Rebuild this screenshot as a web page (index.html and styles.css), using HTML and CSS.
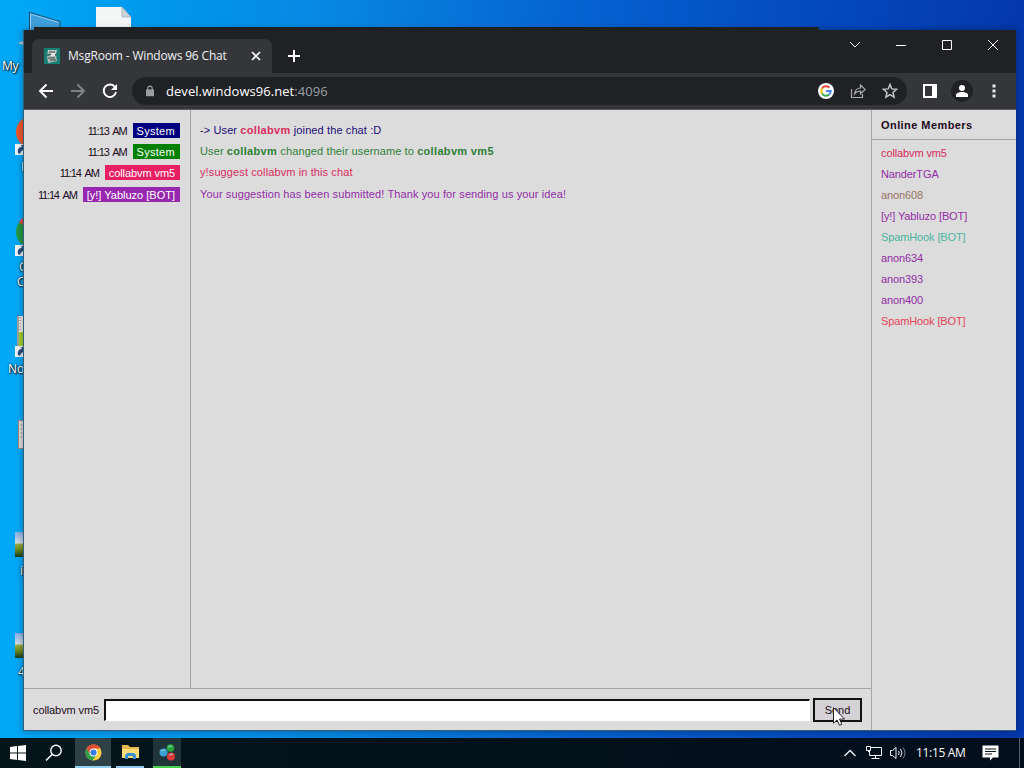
FILE: index.html
```
<!DOCTYPE html>
<html lang="en">
<head>
  <meta charset="UTF-8">
  <title>MsgRoom - Windows 96 Chat</title>
  <link rel="stylesheet" href="styles.css">
</head>

<body>
  <div class="desktop">
    <div class="shortcut computer">
      <svg width="52" height="64" viewBox="0 0 52 64"><path d="M19.500.5 50 9.500v30H19.500z" fill="#3d9fdc"/><path d="M19.500 30V.5L50 9.500V20" fill="none" stroke="#1c4d70"/><path d="M20.500 30V2L49 10.500" fill="none" stroke="#8fd0f3"/><path d="m8 31 10-4v8z" fill="#b9c4cc"/></svg>
      <span>My C</span>
    </div>
    <svg class="shortcut document" width="36" height="28" viewBox="0 0 36 28"><path d="M0 0h26l9 10v18H0z" fill="#f4f5f5"/><path d="M26 0v10h9z" fill="#ccd4da" stroke="#8ba2b2" stroke-width=".6"/></svg>
    <div class="shortcut firefox">
      <svg width="32" height="42" viewBox="0 0 32 42"><circle cx="17" cy="15" r="16" fill="#f0562b"/><path d="M0 27h11v11H0z" fill="#eef2f5"/><path d="M3 36c-1-5 2-6 4-6l-1-2h5v7l-2-2c-2 0-3 1-4 4z" fill="#274e80"/></svg>
      <span>Firefox</span>
    </div>
    <div class="shortcut chrome">
      <svg width="32" height="42" viewBox="0 0 32 42"><circle cx="17" cy="15" r="16" fill="#239746"/><path d="M4 5a16 16 0 0 1 26 0L17 15z" fill="#e34a3d"/><path d="M0 28h11v11H0z" fill="#eef2f5"/><path d="M3 37c-1-5 2-6 4-6l-1-2h5v7l-2-2c-2 0-3 1-4 4z" fill="#274e80"/></svg>
      <span>Google</span>
      <span class="second">Chrome</span>
    </div>
    <div class="shortcut notepad">
      <svg width="32" height="44" viewBox="0 0 32 44"><path d="M2 2h28v38H2z" fill="#edf0e8"/><path d="M3 1v40" stroke="#555"/><path d="M5 3v13m4-13v13" stroke="#879" stroke-dasharray="1 2"/><path d="M4 18h24v14H4z" fill="#a3cf2f"/><path d="M0 32h11v11H0z" fill="#eef2f5"/><path d="M3 41c-1-5 2-6 4-6l-1-2h5v7l-2-2c-2 0-3 1-4 4z" fill="#274e80"/></svg>
      <span>Notepad</span>
    </div>
    <svg class="shortcut textfile" width="24" height="30" viewBox="0 0 24 30"><path d="M.5.5h23v28H.5z" fill="#ddd" stroke="#a48378"/><path d="M3 5h18M3 9h18M3 13h18M3 17h18" stroke="#666" stroke-dasharray="1 1"/></svg>
    <div class="shortcut picture picture-a"><i></i><span>im</span></div>
    <div class="shortcut picture picture-b"><i></i><span>4k</span></div>

    <div class="back-window"></div>

    <div class="window">
      <div class="tabstrip">
        <div class="tab">
          <svg class="favicon" width="16" height="16" viewBox="0 0 16 16"><path fill="#167f76" d="M0 0h16v16H0z"/><path d="M4 2h9l-1 4-9 1z" fill="#c5ccca"/><path d="m3 8 9-1 1 6-9 2z" fill="#aeb9b6"/><path d="M5 4h6M4 10h7M6 12h6M3 6l9 1" stroke="#344746"/><path d="M8 5h3v3H6z" fill="#e8e4df"/></svg>
          <span class="tab-title">MsgRoom - Windows 96 Chat</span>
          <svg class="tab-close" width="10" height="10" viewBox="0 0 10 10"><path d="m1 1 8 8m0-8L1 9"/></svg>
        </div>
        <svg class="new-tab" width="12" height="12" viewBox="0 0 12 12"><path d="M6 0v12M0 6h12"/></svg>
        <div class="controls">
          <svg viewBox="0 0 12 12"><path d="m1 3 5 5 5-5"/></svg>
          <svg viewBox="0 0 12 12"><path d="M1 6.500h10" shape-rendering="crispEdges"/></svg>
          <svg viewBox="0 0 12 12"><path d="M1.500 1.500h9v9h-9z"/></svg>
          <svg viewBox="0 0 12 12"><path d="m1 1 10 10m0-10L1 11"/></svg>
        </div>
      </div>

      <div class="toolbar">
        <svg class="nav" viewBox="0 0 16 16"><path d="M15 8H2m6.500-6.500L2 8l6.500 6.500"/></svg>
        <svg class="nav off" viewBox="0 0 16 16"><path d="M1 8h13M7.500 1.500 14 8l-6.500 6.500"/></svg>
        <svg class="nav" viewBox="0 0 16 16"><path d="M13 4.200A6.200 6.200 0 1 0 14 9"/><path d="M15 1v6H9z" fill="#fff" stroke="none"/></svg>
        <div class="address">
          <svg class="lock" width="8" height="12" viewBox="0 0 10 14"><path d="M0 5h10v8.500H0z" fill="#9a9da1"/><path d="M2.300 6V3.500a2.700 2.700 0 0 1 5.400 0V6" fill="none" stroke="#9a9da1" stroke-width="1.500"/></svg>
          <span class="url">devel.windows96.net<span class="port">:4096</span></span>
          <div class="address-actions">
            <svg viewBox="0 0 16 16"><circle cx="8" cy="8" r="8" fill="#fff"/><g fill="none" stroke-width="2"><path d="M11.400 4.700A4.700 4.700 0 0 0 4 5.600" stroke="#ea4335"/><path d="M4 5.600a4.700 4.700 0 0 0 0 4.800" stroke="#fbbc05"/><path d="M4 10.400a4.700 4.700 0 0 0 7.200 1.100" stroke="#34a853"/><path d="M11.200 11.500A4.700 4.700 0 0 0 12.700 8H8" stroke="#4285f4"/></g></svg>
            <svg viewBox="0 0 16 16"><path d="M1.500 6v8.500h11V11M4.500 11c.5-4 2.500-6 6-6V2l4.700 4.500-4.700 4.300V8c-3 0-4.500 1-6 3z" fill="none" stroke="#a9abae" stroke-width="1.200"/></svg>
            <svg viewBox="0 0 16 16"><path d="m8 1.500 1.800 4.400 4.800.4L11 9.400l1.100 4.700L8 11.600l-4.100 2.500L5 9.400 1.400 6.300l4.800-.4z" fill="none" stroke="#c4c6c8" stroke-width="1.500"/></svg>
          </div>
        </div>
        <svg class="side-panel" width="14" height="14" viewBox="0 0 14 14"><path d="M1 1h12v12H1z" fill="none" stroke="#fff" stroke-width="2"/><path d="M9 1h4v12H9z" fill="#fff"/></svg>
        <div class="avatar"><svg width="14" height="14" viewBox="0 0 14 14"><circle cx="7" cy="4" r="3" fill="#fff"/><path d="M1 13v-2c0-4 12-4 12 0v2z" fill="#fff"/></svg></div>
        <svg class="menu" width="4" height="14" viewBox="0 0 4 14"><path d="M.5.5h3v3h-3zm0 5h3v3h-3zm0 5h3v3h-3z" fill="#e8eaed"/></svg>
      </div>

      <div class="page">
        <div class="chat">
          <div class="messages">
            <div class="author"><time>11:13 AM</time><span class="tag tag-system navy-bg">System</span></div>
            <div class="text navy">-&gt; User <b class="pink">collabvm</b> joined the chat :D</div>
            <div class="author"><time>11:13 AM</time><span class="tag tag-system green-bg">System</span></div>
            <div class="text green">User <b>collabvm</b> changed their username to <b>collabvm vm5</b></div>
            <div class="author"><time>11:14 AM</time><span class="tag tag-user pink-bg">collabvm vm5</span></div>
            <div class="text pink">y!suggest collabvm in this chat</div>
            <div class="author"><time>11:14 AM</time><span class="tag purple-bg">[y!] Yabluzo [BOT]</span></div>
            <div class="text purple">Your suggestion has been submitted! Thank you for sending us your idea!</div>
          </div>
          <form class="composer">
            <label for="message">collabvm vm5</label>
            <input type="text" id="message">
            <button type="button">Send</button>
          </form>
        </div>
        <aside class="members">
          <h2>Online Members</h2>
          <ul>
            <li class="pink">collabvm vm5</li>
            <li class="purple">NanderTGA</li>
            <li class="brown">anon608</li>
            <li class="purple">[y!] Yabluzo [BOT]</li>
            <li class="teal">SpamHook [BOT]</li>
            <li class="purple">anon634</li>
            <li class="purple">anon393</li>
            <li class="purple">anon400</li>
            <li class="red">SpamHook [BOT]</li>
          </ul>
        </aside>
      </div>
    </div>

    <div class="taskbar">
      <div class="task start"><svg width="16" height="16" viewBox="0 0 16 16"><path d="m0 2 7-1v6.500H0zm8-1.100L16 0v7.500H8zM0 8.500h7V15l-7-1zm8 0h8V16l-8-1.100z" fill="#fff"/></svg></div>
      <div class="task search"><svg width="18" height="18" viewBox="0 0 18 18"><circle cx="11" cy="6.500" r="5.200" fill="none" stroke="#fff" stroke-width="1.400"/><path d="M7.300 10.200 1 16.500" stroke="#fff" stroke-width="1.600"/></svg></div>
      <div class="task active"><svg width="17" height="17" viewBox="0 0 18 18"><circle cx="9" cy="9" r="8.500" fill="#ffcd40"/><path d="M1.600 4.800A8.500 8.500 0 0 1 16.400 4.800H9L5.400 11z" fill="#e3493b"/><path d="M1.600 4.800a8.500 8.500 0 0 0 6.200 12.600L12.600 11H5.400z" fill="#2ba14b"/><circle cx="9" cy="9" r="4.200" fill="#fff"/><circle cx="9" cy="9" r="3.300" fill="#367be2"/></svg></div>
      <div class="task explorer"><svg width="17" height="16" viewBox="0 0 17 16"><path d="M0 1h6l2 2h9v11H0z" fill="#e9b84c"/><path d="M0 5h17v9H0z" fill="#ffdc7a"/><path d="M3 15v-4l2-2h7l2 2v4h-3v-3H6v3z" fill="#3992cf"/></svg></div>
      <div class="task cloud"><svg width="17" height="17" viewBox="0 0 17 17"><circle cx="11.500" cy="4" r="3.800" fill="#27a83b"/><circle cx="4.500" cy="8.500" r="4" fill="#3b9fd3"/><circle cx="12" cy="12.500" r="4" fill="#df3935"/><path d="m2 7 4-1M9 3l4-1M10 11l4-1" stroke="#9bdadb"/></svg></div>
      <div class="tray">
        <svg class="tray-up" width="12" height="8" viewBox="0 0 12 8"><path d="m.5 7 5.500-5.500L11.500 7"/></svg>
        <svg class="tray-net" width="17" height="14" viewBox="0 0 17 14"><path d="M5 1.500h10.500v8h-12V5M9.500 10v3M5.500 12.500h8M.5.500h4v4h-4zM2.500 4v2"/></svg>
        <svg class="tray-sound" width="16" height="14" viewBox="0 0 16 14"><path d="M.5 4.500h2L6 1.500v11L2.500 9.500h-2zM8.500 5q1.500 2 0 4M10.500 3q3 4 0 8"/><path d="M13 1.500q4 5.500 0 11" opacity=".5"/></svg>
        <span class="clock">11:15 AM</span>
        <svg class="tray-note" width="17" height="16" viewBox="0 0 17 16"><path d="M.5.500h16v12H11l-3 3v-3H.5z" fill="#fff"/><path d="M3 4h11M3 6.500h11M3 9h7" stroke="#08131c"/></svg>
        <span class="show-desktop"></span>
      </div>
    </div>

    <svg class="cursor" width="12" height="19" viewBox="0 0 12 19"><path d="M.5.700v15.500L4 13l2.500 5.300 2.300-1L6.500 12h5z" fill="#fff" stroke="#111" stroke-width=".9"/></svg>
  </div>
</body>
</html>
```
FILE: styles.css
```
* {
  box-sizing: border-box;
}

body {
  margin: 0;
  overflow: hidden;
}

svg {
  display: block;
  flex: none;
}

.desktop {
  display: flex;
  position: relative;
  flex-direction: column;
  justify-content: flex-end;
  width: 1024px;
  height: 768px;
  overflow: hidden;
  background: linear-gradient(90deg, #00a9f8 0, #0098ee 150px, #0788e3 320px, #0565d2 560px, #044bc0 800px, #0537ad 1024px);
}

/* desktop shortcuts */
.shortcut {
  position: absolute;
  color: #fff;
  font: 12px/15px "Open Sans", sans-serif;
  text-shadow: 1px 1px 2px #000, 0 0 2px #000;
}

.computer {
  top: 12px;
  left: 10px;
}

.computer span {
  position: absolute;
  top: 46px;
  left: -8px;
  letter-spacing: -.4px;
  word-spacing: 3px;
  white-space: nowrap;
}

.document {
  top: 7px;
  left: 96px;
}

.firefox,
.chrome,
.notepad {
  left: 15px;
}

.firefox {
  top: 117px;
}

.firefox span {
  margin-left: 6px;
}

.chrome {
  top: 217px;
}

.chrome span {
  display: block;
  margin-left: 4px;
}

.chrome .second {
  margin-left: 2px;
}

.notepad {
  top: 314px;
}

.notepad span {
  display: block;
  margin: 3px 0 0 -7px;
}

.textfile {
  top: 420px;
  left: 18px;
}

.picture {
  left: 15px;
}

.picture-a {
  top: 532px;
}

.picture-b {
  top: 633px;
}

.picture i {
  display: block;
  width: 32px;
  height: 25px;
  margin-bottom: 6px;
  background: linear-gradient(#87aee2, #d1ddeb 43%, #95a93f 50%, #708c24 70%, #183b1c);
}

.picture span {
  margin-left: 5px;
}

.picture-b span {
  margin-left: 3px;
}

.back-window {
  position: absolute;
  top: 27px;
  left: 34px;
  width: 785px;
  height: 10px;
  background: #242526;
}

/* browser */
.window {
  display: flex;
  position: absolute;
  top: 30px;
  left: 23px;
  flex-direction: column;
  width: 993px;
  height: 701px;
  border-bottom: 1px solid #315e79;
  border-left: 1px solid #315e79;
  background: #dcdcdc;
  box-shadow: 0 0 7px rgba(0, 0, 0, .35);
}

.tabstrip {
  display: flex;
  flex: none;
  height: 43px;
  padding-left: 8px;
  background: #202124;
}

.tab {
  display: flex;
  align-items: center;
  width: 240px;
  height: 34px;
  margin-top: 9px;
  padding: 0 11px 0 12px;
  border-radius: 8px 8px 0 0;
  background: #35363a;
}

.tab-title {
  margin-left: 8px;
  color: #f0f1f2;
  font: 12px/18px "Open Sans", sans-serif;
  letter-spacing: -.17px;
  white-space: nowrap;
}

.tab-close {
  margin-left: auto;
}

.tab-close,
.new-tab {
  fill: none;
  stroke: #fff;
  stroke-width: 1.6;
}

.new-tab {
  margin: 20px 0 0 16px;
  stroke-width: 2;
}

.controls {
  display: flex;
  gap: 34px;
  margin: 9px 17px 0 auto;
}

.controls svg {
  width: 12px;
  height: 12px;
  fill: none;
  stroke: #fff;
}

.toolbar {
  display: flex;
  flex: none;
  align-items: center;
  height: 37px;
  padding: 0 20px 0 14px;
  border-bottom: 1px solid #5b5c5f;
  background: #35363a;
}

.nav {
  width: 16px;
  height: 16px;
  margin-right: 16px;
  fill: none;
  stroke: #fff;
  stroke-width: 1.9;
}

.off {
  stroke: #818387;
}

.address {
  display: flex;
  align-items: center;
  width: 775px;
  height: 28px;
  margin-left: -2px;
  padding: 0 9px 0 14px;
  border-radius: 14px;
  background: #202124;
}

.url {
  margin-left: 12px;
  color: #fff;
  font: 13px/20px "Open Sans", sans-serif;
  letter-spacing: .05px;
}

.port {
  color: #9aa0a6;
}

.address-actions {
  display: flex;
  gap: 16px;
  margin-left: auto;
}

.address-actions svg {
  width: 16px;
  height: 16px;
}

.side-panel {
  margin-left: 16px;
}

.avatar {
  display: flex;
  align-items: center;
  justify-content: center;
  width: 22px;
  height: 22px;
  margin-left: 14px;
  border-radius: 50%;
  background: #202124;
}

.menu {
  margin-left: auto;
}

/* chat page */
.page {
  display: flex;
  flex: 1;
  min-height: 0;
  color: #210b22;
  font: 11px/16px "Liberation Sans", Arial, sans-serif;
}

.chat {
  display: flex;
  flex-direction: column;
  width: 848px;
  border-right: 1px solid #a5a5a5;
}

.messages {
  display: grid;
  flex: 1;
  grid-template-columns: 167px 1fr;
  grid-template-rows: 21px 21px 22px 21px;
  align-content: start;
  padding-top: 13px;
  background: linear-gradient(90deg, transparent 166px, #a5a5a5 166px, #a5a5a5 167px, transparent 167px);
}

.author {
  display: flex;
  justify-content: flex-end;
  padding-right: 11px;
  white-space: nowrap;
}

.author time {
  margin-right: 6px;
  letter-spacing: -1.15px;
  word-spacing: 2.4px;
}

.tag {
  height: 15px;
  padding: 0 5px 0 4px;
  color: #fff;
  line-height: 16px;
}

.tag-system {
  letter-spacing: .3px;
}

.tag-user {
  letter-spacing: -.08px;
}

.text {
  padding-left: 9px;
  line-height: 15px;
  letter-spacing: .11px;
  white-space: nowrap;
}

.text b {
  letter-spacing: .33px;
}

.navy { color: #1b0c76; }
.green { color: #2f8038; }
.pink { color: #da2c60; }
.purple { color: #922ca7; }
.brown { color: #987365; }
.teal { color: #4bb59f; }
.red { color: #e54457; }

.navy-bg { background: #000080; }
.green-bg { background: #008000; }
.pink-bg { background: #e91e63; }
.purple-bg { background: #9627ae; }

.composer {
  display: flex;
  flex: none;
  align-items: center;
  height: 42px;
  padding: 0 9px;
  border-top: 1px solid #a5a5a5;
}

.composer label {
  width: 71px;
  letter-spacing: -.1px;
  white-space: nowrap;
}

.composer input {
  width: 706px;
  height: 22px;
  border: 1px solid #fff;
  border-top: 2px solid #111;
  border-left: 2px solid #111;
  outline: 0;
  background: #fff;
}

.composer button {
  width: 49px;
  height: 24px;
  margin-left: 3px;
  padding: 0;
  border: 2px solid #111;
  color: #210b22;
  font: 11px "Liberation Sans", Arial, sans-serif;
  background: #d4d2d5;
}

.members {
  flex: 1;
}

.members h2 {
  height: 30px;
  margin: 0;
  padding: 0 0 0 9px;
  border-bottom: 1px solid #a5a5a5;
  font-size: 11px;
  letter-spacing: .43px;
  line-height: 30px;
}

.members ul {
  margin: 0;
  padding: 3px 9px;
  list-style: none;
}

.members li {
  letter-spacing: -.12px;
  line-height: 21px;
}

/* taskbar */
.taskbar {
  display: flex;
  height: 30px;
  background: linear-gradient(90deg, #03151b, #030e1c);
}

.task {
  display: flex;
  align-items: center;
  justify-content: center;
  width: 36px;
}

.search {
  margin-right: 3px;
}

.active {
  border-bottom: 2px solid #92d1f3;
  background: #2e4147;
}

.explorer {
  width: 28px;
  margin-left: 5px;
  border-bottom: 2px solid #92c8f0;
}

.cloud {
  width: 28px;
  margin-left: 9px;
  border-bottom: 2px solid #48d34e;
  background: #20343a;
}

.tray {
  display: flex;
  align-items: center;
  margin-left: auto;
}

.tray-up,
.tray-net,
.tray-sound {
  fill: none;
  stroke: #f2f5f6;
}

.tray-up {
  stroke-width: 1.4;
}

.tray-net {
  margin-left: 10px;
}

.tray-sound {
  margin-left: 7px;
}

.clock {
  width: 50px;
  margin-left: 10px;
  color: #fff;
  font: 12px/18px "Open Sans", sans-serif;
  letter-spacing: -.33px;
  white-space: nowrap;
}

.tray-note {
  margin-left: 16px;
}

.show-desktop {
  width: 5px;
  height: 30px;
  margin-left: 20px;
  border-left: 1px solid #56606b;
}

.cursor {
  position: absolute;
  top: 707px;
  left: 833px;
}
```
